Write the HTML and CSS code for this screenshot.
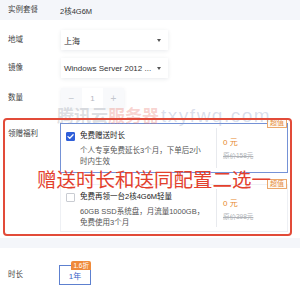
FILE: index.html
```html
<!DOCTYPE html>
<html lang="zh">
<head>
<meta charset="utf-8">
<title>购买配置</title>
<link rel="stylesheet" href="styles.css">
</head>
<body>
<div class="page">
  <div class="row top-row">
    <span class="label">实例套餐</span>
    <span class="value">2核4G6M</span>
  </div>

  <div class="section main">
    <div class="row">
      <span class="label">地域</span>
      <div class="select"><span>上海</span><i class="caret"></i></div>
    </div>
    <div class="row r-image">
      <span class="label">镜像</span>
      <div class="select"><span>Windows Server 2012 ...</span><i class="caret"></i></div>
    </div>
    <div class="row r-qty">
      <span class="label">数量</span>
      <div class="stepper">
        <span class="step">−</span>
        <span class="num">1</span>
        <span class="step">+</span>
      </div>
    </div>

    <div class="row gift">
      <span class="label gift-label">领赠福利</span>
      <div class="options">
        <div class="card selected">
          <span class="badge">超值</span>
          <div class="card-main">
            <span class="check on">
              <svg viewBox="0 0 10 10" width="9" height="9"><path d="M2.2 5.1 L4.2 7 L7.9 3.1" fill="none" stroke="#fff" stroke-width="1.4" stroke-linecap="round" stroke-linejoin="round"/></svg>
            </span>
            <div class="card-text">
              <div class="card-title">免费赠送时长</div>
              <div class="card-desc">个人专享免费延长3个月，下单后2小<br>时内生效</div>
            </div>
          </div>
          <div class="card-price">
            <div class="price">0 元</div>
            <div class="orig">原价158元</div>
          </div>
        </div>

        <div class="card second">
          <span class="badge">超值</span>
          <div class="card-main">
            <span class="check"></span>
            <div class="card-text">
              <div class="card-title">免费再领一台2核4G6M轻量</div>
              <div class="card-desc">60GB SSD系统盘，月流量1000GB，<br>免费使用3个月</div>
            </div>
          </div>
          <div class="card-price">
            <div class="price">0 元</div>
            <div class="orig">原价398元</div>
          </div>
        </div>
      </div>

      <div class="watermark"><span class="wm-a">腾讯云</span><span class="wm-b">服务器</span> <span class="wm-c">txyfwq.com</span></div>
      <div class="annot-box"></div>
      <div class="annot-text">赠送时长和送同配置二选一</div>
    </div>
  </div>

  <div class="band"></div>

  <div class="section last">
    <div class="row">
      <span class="label">时长</span>
      <div class="dur"><span class="dur-tag">1.6折</span>1年</div>
    </div>
  </div>
</div>
</body>
</html>
```

FILE: styles.css
```css
* { box-sizing: border-box; }

html, body {
  margin: 0;
  padding: 0;
  background: #ffffff;
}

body {
  font-family: "Liberation Sans", "Noto Sans CJK SC", sans-serif;
  font-size: 7.5px;
  color: #333;
}

.page {
  width: 300px;
  height: 300px;
  overflow: hidden;
  background: #fff;
}

.row {
  display: flex;
  align-items: center;
}

.label {
  width: 60px;
  flex: none;
  padding-left: 8px;
  color: #444;
  font-size: 7.5px;
  line-height: 10px;
}

.top-row {
  height: 20px;
  background: #f4f6fa;
}

.value {
  font-size: 7.5px;
  color: #333;
}

.section.main {
  padding: 10px 0 6px;
}

.select {
  margin-left: 1px;
  width: 107px;
  height: 20px;
  display: flex;
  align-items: center;
  padding-left: 3px;
  background: #fff;
  box-shadow: 0 1px 4px rgba(30, 45, 80, 0.10);
  font-size: 8px;
  color: #333;
}

.caret {
  margin-left: auto;
  margin-right: 7px;
  width: 0;
  height: 0;
  border-left: 2.5px solid transparent;
  border-right: 2.5px solid transparent;
  border-top: 3px solid #555;
}

.r-image { margin-top: 8px; }
.r-qty { margin-top: 10px; }

.stepper {
  margin-left: 1px;
  display: flex;
  height: 20px;
  background: #fff;
  box-shadow: 0 1px 4px rgba(30, 45, 80, 0.08);
}

.step {
  width: 21px;
  display: flex;
  align-items: center;
  justify-content: center;
  background: #f8f9fb;
  color: #c3c7ce;
  font-size: 10px;
}

.num {
  width: 21px;
  display: flex;
  align-items: center;
  justify-content: center;
  color: #b3b7bf;
  font-size: 8px;
}

.gift {
  position: relative;
  align-items: flex-start;
  margin-top: 15px;
}

.gift-label {
  padding-top: 6px;
}

.options {
  width: 228px;
  display: flex;
  flex-direction: column;
  gap: 11px;
}

.card {
  position: relative;
  display: flex;
  height: 50px;
  border: 1px solid #eef0f4;
  background: #fff;
}

.card.selected {
  border-color: #7592d6;
}

.card.second {
  height: 48px;
}

.badge {
  position: absolute;
  top: -6px;
  right: 0;
  height: 10px;
  padding: 0 2px;
  border: 1px solid #eca76b;
  background: #fffaf4;
  color: #e58a3c;
  font-size: 7px;
  line-height: 8px;
  z-index: 2;
}

.card-main {
  width: 155px;
  display: flex;
  align-items: flex-start;
  padding: 7px 0 0 5px;
}

.check {
  flex: none;
  width: 9px;
  height: 9px;
  margin-top: 1px;
  margin-right: 5px;
  border: 1px solid #c9ccd2;
  border-radius: 1px;
  background: #fff;
  display: flex;
}

.check.on {
  border-color: #2f5fd9;
  background: #2f5fd9;
}

.check svg {
  display: block;
  margin: -1px;
}

.card-title {
  line-height: 10px;
  color: #222;
}

.card-desc {
  margin-top: 4px;
  line-height: 11px;
  color: #555;
}

.card-price {
  flex: 1;
  margin: 4px 0;
  padding-left: 6px;
  border-left: 1px solid #e8eaee;
}

.price {
  margin-top: 10px;
  line-height: 10px;
  font-size: 8px;
  color: #e6892f;
}

.orig {
  margin-top: 3px;
  line-height: 9px;
  font-size: 6.5px;
  color: #b0b3b8;
  text-decoration: line-through;
}

.watermark {
  position: absolute;
  left: 57px;
  top: -17px;
  line-height: 17px;
  white-space: nowrap;
  pointer-events: none;
  z-index: 3;
}

.wm-a, .wm-b {
  font-family: "Noto Sans CJK SC", sans-serif;
  font-weight: 700;
  font-size: 17px;
}

.wm-a { color: rgba(150, 156, 168, 0.32); }
.wm-b { color: rgba(235, 120, 108, 0.32); }

.wm-c {
  font-size: 19px;
  letter-spacing: 1.5px;
  color: rgba(140, 158, 196, 0.32);
}

.annot-box {
  position: absolute;
  top: -5px;
  bottom: -4px;
  left: 3px;
  right: 8px;
  border: 2px solid #e24b39;
  border-radius: 4px;
  pointer-events: none;
  z-index: 4;
}

.annot-text {
  position: absolute;
  left: 37px;
  top: 46px;
  font-family: "Noto Sans CJK SC", sans-serif;
  font-size: 19.5px;
  line-height: 20px;
  color: #e3402d;
  white-space: nowrap;
  z-index: 5;
}

.band {
  height: 10px;
  background: #f4f6fa;
}

.section.last {
  padding-top: 17px;
}

.dur {
  position: relative;
  margin-left: -1px;
  width: 32px;
  height: 20px;
  border: 1px solid #5d80cf;
  display: flex;
  align-items: center;
  justify-content: center;
  color: #3a62c8;
  font-size: 8px;
}

.dur-tag {
  position: absolute;
  top: -5px;
  right: -1px;
  height: 9px;
  padding: 0 2px;
  background: #ef8a3b;
  color: #fff;
  font-size: 6.5px;
  line-height: 9px;
  border-radius: 2px 2px 0 0;
}
```
